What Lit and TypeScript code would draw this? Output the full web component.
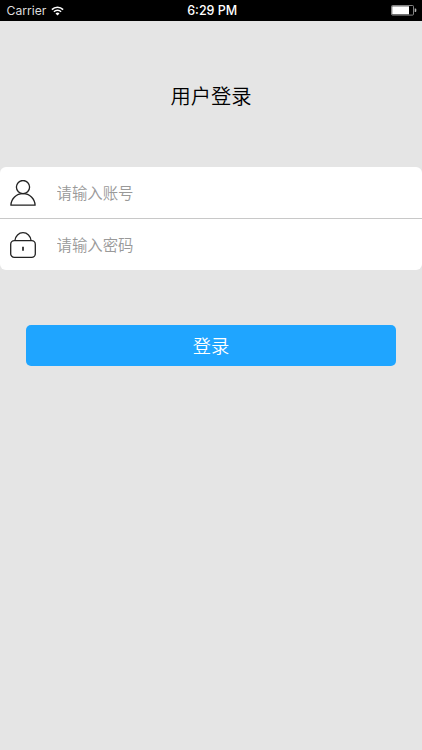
import { LitElement, html, css, svg } from "lit";
import { customElement } from "lit/decorators.js";

const wifiIcon = svg`
  <svg class="wifi" viewBox="0 0 13 10" width="13" height="10" fill="none" stroke="#fff">
    <path d="M0.9 3.6a7.9 7.9 0 0 1 11.2 0" stroke-width="1.6" />
    <path d="M2.9 5.7a5.1 5.1 0 0 1 7.2 0" stroke-width="1.5" />
    <path d="M6.5 9.4 4.5 7.4a2.8 2.8 0 0 1 4 0z" fill="#fff" stroke="none" />
  </svg>`;

const batteryIcon = svg`
  <svg class="battery" viewBox="0 0 26 11" width="26" height="11">
    <rect x="0.5" y="0.5" width="22" height="9.6" rx="1" fill="none" stroke="#a5a5a5" stroke-width="0.8" />
    <rect x="1.2" y="1.3" width="16.8" height="8" fill="#fff" />
    <path d="M23.7 3.6h0.7q0.9 0 0.9 1v1.4q0 1-0.9 1h-0.7z" fill="#b5b5b5" />
  </svg>`;

const userIcon = svg`
  <svg class="icon" viewBox="0 0 26 26" width="26" height="26" fill="none" stroke="#222" stroke-width="1.3">
    <circle cx="13" cy="7.1" r="6.6" />
    <path d="M0.9 25.2C1.2 18.6 6.3 13.7 13 13.7S24.8 18.6 25.1 25.2z" stroke-linejoin="round" />
  </svg>`;

const lockIcon = svg`
  <svg class="icon" viewBox="0 0 26 26" width="26" height="26" fill="none" stroke="#222" stroke-width="1.3">
    <rect x="0.7" y="8.7" width="24.6" height="16.6" rx="3.6" />
    <path d="M4.9 8.5C5.4 4 8.7 0.7 13 0.7S20.6 4 21.1 8.5" />
    <path d="M13 14.7v4" stroke-width="1.7" />
  </svg>`;

@customElement("app-root")
export class AppRoot extends LitElement {
  static styles = css`
    :host {
      display: block;
      height: 750px;
      background: #e5e5e5;
      color: #000;
      font-family: "Noto Sans CJK SC", sans-serif;
      overflow: hidden;
    }
    .status {
      display: grid;
      grid-template-columns: 1fr auto 1fr;
      align-items: center;
      height: 20.5px;
      padding: 1px 5px 0 6.5px;
      box-sizing: border-box;
      background: #000;
      color: #fff;
      font: 12.5px/20px Inter, sans-serif;
    }
    .carrier {
      display: flex;
      align-items: center;
      gap: 5px;
      color: #ddd;
      font-size: 12.2px;
    }
    .wifi {
      margin-bottom: 1px;
    }
    .time {
      font-weight: 500;
      padding-left: 1px;
    }
    .battery {
      justify-self: end;
      margin-bottom: 1px;
    }
    svg {
      display: block;
    }
    h1 {
      margin: 59.5px 0 0;
      font-size: 20.3px;
      line-height: 30px;
      font-weight: 350;
      text-align: center;
    }
    .card {
      margin-top: 57px;
      height: 103px;
      border-radius: 6px;
      background: #fff;
      display: flex;
      flex-direction: column;
    }
    .row {
      flex: 1;
      display: flex;
      align-items: center;
      padding-left: 10px;
      gap: 20.5px;
    }
    .row + .row {
      border-top: 1px solid #c8c8c8;
    }
    input {
      flex: 1;
      min-width: 0;
      padding: 0 0 2px;
      border: 0;
      outline: 0;
      background: none;
      font: 350 15.4px/24px "Noto Sans CJK SC", sans-serif;
    }
    input::placeholder {
      color: #999;
      opacity: 1;
    }
    button {
      display: block;
      width: 370px;
      height: 41px;
      margin: 55px auto 0;
      padding: 0;
      border: 0;
      border-radius: 5px;
      background: #1fa5ff;
      color: #fff;
      font: 350 18.3px/41px "Noto Sans CJK SC", sans-serif;
    }
  `;

  render() {
    return html`
      <div class="status">
        <div class="carrier"><span>Carrier</span>${wifiIcon}</div>
        <div class="time">6:29 PM</div>
        ${batteryIcon}
      </div>
      <h1>用户登录</h1>
      <div class="card">
        <label class="row">${userIcon}<input type="text" placeholder="请输入账号" /></label>
        <label class="row">${lockIcon}<input type="password" placeholder="请输入密码" /></label>
      </div>
      <button>登录</button>
    `;
  }
}
